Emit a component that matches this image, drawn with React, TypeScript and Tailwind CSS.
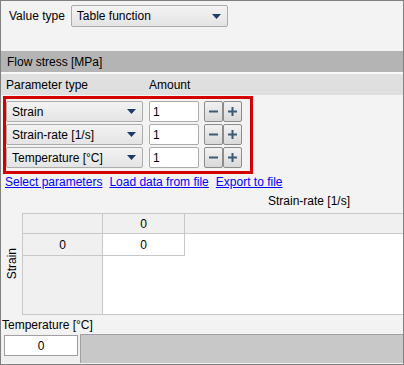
import type { ReactNode } from 'react'

const PARAMS = ['Strain', 'Strain-rate [1/s]', 'Temperature [°C]']

function Arrow() {
  return (
    <svg width="9" height="5" viewBox="0 0 9 5" className="shrink-0">
      <path d="M0 0h9L4.5 5z" fill="#1e3a6b" />
    </svg>
  )
}

function Select({ label, className }: { label: string; className: string }) {
  return (
    <div
      className={`flex items-center justify-between rounded-[2px] border border-[#acacac] bg-[linear-gradient(180deg,#f3f3f3,#e4e4e4)] pl-[5px] pr-[6px] ${className}`}
    >
      <span>{label}</span>
      <Arrow />
    </div>
  )
}

function StepButton({ children }: { children: ReactNode }) {
  return (
    <div className="flex h-full w-[19px] items-center justify-center rounded-[2px] border border-[#8c8c8c] bg-[linear-gradient(180deg,#f2f2f2,#d9d9d9)]">
      {children}
    </div>
  )
}

function ParamRow({ label }: { label: string }) {
  return (
    <div className="flex h-[21px] items-center">
      <Select label={label} className="h-full w-[137px]" />
      <div className="ml-[6px] flex h-full w-[50px] items-center rounded-[2px] border border-[#ababab] bg-white pl-[3px]">
        1
      </div>
      <div className="ml-[5px] flex h-full">
        <StepButton>
          <svg width="9" height="9" viewBox="0 0 9 9">
            <rect x="0" y="3.5" width="9" height="2" fill="#3a5a75" />
          </svg>
        </StepButton>
        <StepButton>
          <svg width="9" height="9" viewBox="0 0 9 9">
            <rect x="0" y="3.5" width="9" height="2" fill="#3a5a75" />
            <rect x="3.5" y="0" width="2" height="9" fill="#3a5a75" />
          </svg>
        </StepButton>
      </div>
    </div>
  )
}

export default function App() {
  return (
    <div className="flex h-[365px] w-[404px] flex-col border border-[#808080] bg-[#f3f3f3] font-['Liberation_Sans',Arial,sans-serif] text-[12px] leading-none text-black">
      <div className="flex h-[50px] shrink-0 items-start pl-[8px] pt-[4px]">
        <div className="flex h-[22px] items-center">
          <span>Value type</span>
          <Select label="Table function" className="ml-[6px] h-full w-[157px]" />
        </div>
      </div>

      <div className="flex h-[21px] shrink-0 items-center bg-[#b4b4b4] pl-[6px]">Flow stress [MPa]</div>
      <div className="h-[2px] shrink-0 bg-[#f9f9f9]" />
      <div className="flex h-[21px] shrink-0 items-center bg-[#dfdfdf] pl-[5px]">
        <span className="w-[143px]">Parameter type</span>
        <span>Amount</span>
      </div>

      <div className="mt-[1px] ml-[2px] flex h-[78px] w-[250px] shrink-0 flex-col gap-[2px] border-[3px] border-[#d40000] pt-[2px]">
        {PARAMS.map((p) => (
          <ParamRow key={p} label={p} />
        ))}
      </div>

      <div className="flex h-[15px] shrink-0 items-center gap-[7px] pl-[4px] text-[#0000ff] underline">
        <span>Select parameters</span>
        <span>Load data from file</span>
        <span>Export to file</span>
      </div>

      <div className="flex h-[24px] shrink-0 items-center pl-[267px]">Strain-rate [1/s]</div>

      <div className="flex h-[102px] shrink-0">
        <div className="flex w-[21px] items-center justify-center">
          <span className="rotate-180 [writing-mode:vertical-rl]">Strain</span>
        </div>
        <div className="flex flex-1 flex-col border-y border-l border-[#c8c8c8]">
          <div className="flex h-[20px] shrink-0 bg-[#f0f0f0]">
            <div className="w-[80px] border-r border-b border-[#c8c8c8]" />
            <div className="flex w-[82px] items-center justify-center border-r border-b border-[#c8c8c8]">0</div>
            <div className="flex-1 border-b border-[#c8c8c8]" />
          </div>
          <div className="flex flex-1">
            <div className="w-[80px] border-r border-[#c8c8c8] bg-[#f0f0f0]">
              <div className="flex h-[22px] items-center justify-center border-b border-[#c8c8c8]">0</div>
            </div>
            <div className="flex-1 bg-white">
              <div className="flex h-[22px] w-[82px] items-center justify-center border-r border-b border-[#c8c8c8]">0</div>
            </div>
          </div>
        </div>
      </div>

      <div className="flex h-[19px] shrink-0 items-center pl-[1px]">Temperature [°C]</div>

      <div className="flex h-[29px] shrink-0">
        <div className="w-[80px] border-r border-[#a0a0a0] bg-[#f0f0f0] pl-[3px] pt-[1px]">
          <div className="flex h-[21px] w-[74px] items-center justify-center border border-[#a0a0a0] bg-white">0</div>
        </div>
        <div className="flex-1 border-t border-[#a0a0a0] bg-[#c8c8c8]" />
      </div>
    </div>
  )
}
